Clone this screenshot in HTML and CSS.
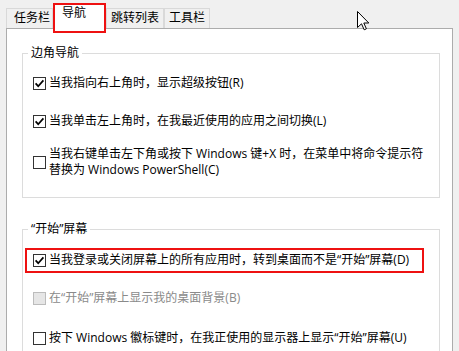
FILE: index.html
```html
<!DOCTYPE html>
<html lang="zh-CN">
<head>
<meta charset="utf-8">
<title>任务栏和导航属性</title>
<link rel="stylesheet" href="styles.css">
</head>
<body>
<div class="window">
  <div class="tabs">
    <div class="tab tab-first">任务栏</div>
    <div class="tab tab-active">导航</div>
    <div class="tab">跳转列表</div>
    <div class="tab">工具栏</div>
  </div>
  <div class="panel">
    <fieldset class="group">
      <legend class="group-title">边角导航</legend>
      <div class="opts">
        <div class="opt">
          <svg class="cb" viewBox="0 0 13 13"><rect x="0.5" y="0.5" width="12" height="12" class="cb-box"/><polyline points="2.6,6.4 5.2,9.2 10.4,3.4" class="cb-check"/></svg>
          <span class="label">当我指向右上角时，显示超级按钮(R)</span>
        </div>
        <div class="opt">
          <svg class="cb" viewBox="0 0 13 13"><rect x="0.5" y="0.5" width="12" height="12" class="cb-box"/><polyline points="2.6,6.4 5.2,9.2 10.4,3.4" class="cb-check"/></svg>
          <span class="label">当我单击左上角时，在我最近使用的应用之间切换(L)</span>
        </div>
        <div class="opt opt-multi">
          <svg class="cb" viewBox="0 0 13 13"><rect x="0.5" y="0.5" width="12" height="12" class="cb-box"/></svg>
          <span class="label">当我右键单击左下角或按下 Windows 键+X 时，在菜单中将命令提示符<br>替换为 Windows PowerShell(C)</span>
        </div>
      </div>
    </fieldset>
    <fieldset class="group group-second">
      <legend class="group-title">“开始”屏幕</legend>
      <div class="opts">
        <div class="opt opt-marked">
          <svg class="cb" viewBox="0 0 13 13"><rect x="0.5" y="0.5" width="12" height="12" class="cb-box"/><polyline points="2.6,6.4 5.2,9.2 10.4,3.4" class="cb-check"/></svg>
          <span class="label">当我登录或关闭屏幕上的所有应用时，转到桌面而不是“开始”屏幕(D)</span>
        </div>
        <div class="opt opt-disabled opt-after-mark">
          <svg class="cb" viewBox="0 0 13 13"><rect x="0.5" y="0.5" width="12" height="12" class="cb-box-disabled"/></svg>
          <span class="label">在“开始”屏幕上显示我的桌面背景(B)</span>
        </div>
        <div class="opt opt-last">
          <svg class="cb" viewBox="0 0 13 13"><rect x="0.5" y="0.5" width="12" height="12" class="cb-box"/></svg>
          <span class="label">按下 Windows 徽标键时，在我正使用的显示器上显示“开始”屏幕(U)</span>
        </div>
      </div>
    </fieldset>
  </div>
</div>
<svg class="cursor" width="13" height="20" viewBox="0 0 13 20"><path d="M0.5,0.5 L0.5,16.5 L4.5,12.8 L7.2,18.8 L9.4,17.8 L6.8,12 L11.8,12 Z" fill="#fff" stroke="#000" stroke-width="1" stroke-linejoin="miter"/></svg>
</body>
</html>
```
FILE: styles.css
```css
html, body {
  margin: 0;
  padding: 0;
  height: 351px;
  overflow: hidden;
}
body {
  background: #f0f0f0;
  font-family: "Open Sans", "Noto Sans CJK SC", sans-serif;
  font-size: 12px;
  color: #000;
  position: relative;
}
.tabs {
  display: flex;
  align-items: flex-end;
  height: 28px;
  padding-left: 6px;
}
.tab {
  height: 18px;
  padding: 1px 4px 0 4px;
  border: 1px solid #d9d9d9;
  border-bottom: 0;
  background: #f0f0f0;
  line-height: 16px;
  white-space: nowrap;
}
.tab-first {
  padding-left: 7px;
  padding-right: 2px;
}
.tab-active {
  position: relative;
  z-index: 1;
  height: 26px;
  padding: 0 18px 0 7px;
  border: 2px solid #ee1111;
  background: #fff;
  margin-bottom: -5px;
}
.panel {
  margin-left: 6px;
  width: 418px;
  height: 340px;
  padding: 16px 12px 0 15px;
  background: #fff;
  border: 1px solid #acacac;
}
.group {
  margin: 0;
  min-width: 0;
  padding: 14px 0 19px 10px;
  border: 1px solid #dcdcdc;
}
.group-second {
  margin-top: 23px;
  padding-top: 11px;
}
.group-title {
  padding: 0 3px;
  margin-left: -5px;
  line-height: 16px;
}
.opts {
  display: flex;
  flex-direction: column;
}
.opt {
  display: flex;
  align-items: center;
  line-height: 16px;
  white-space: nowrap;
}
.opt + .opt {
  margin-top: 22px;
}
.opt.opt-multi {
  margin-top: 17px;
}
.opt.opt-after-mark {
  margin-top: 17px;
}
.opt.opt-last {
  margin-top: 24px;
}
.opt-marked {
  margin-left: -8px;
  margin-right: 15px;
  padding: 2px 0 3px 6px;
  border: 2px solid #ee1111;
}
.cb {
  width: 13px;
  height: 13px;
  flex: none;
  margin-right: 3px;
}
.cb-box {
  fill: #fff;
  stroke: #333;
  stroke-width: 1;
}
.cb-box-disabled {
  fill: #e6e6e6;
  stroke: #bcbcbc;
  stroke-width: 1;
}
.cb-check {
  fill: none;
  stroke: #000;
  stroke-width: 1.7;
}
.opt-disabled .label {
  color: #8a8a8a;
}
.cursor {
  position: absolute;
  left: 357px;
  top: 11px;
}
```
